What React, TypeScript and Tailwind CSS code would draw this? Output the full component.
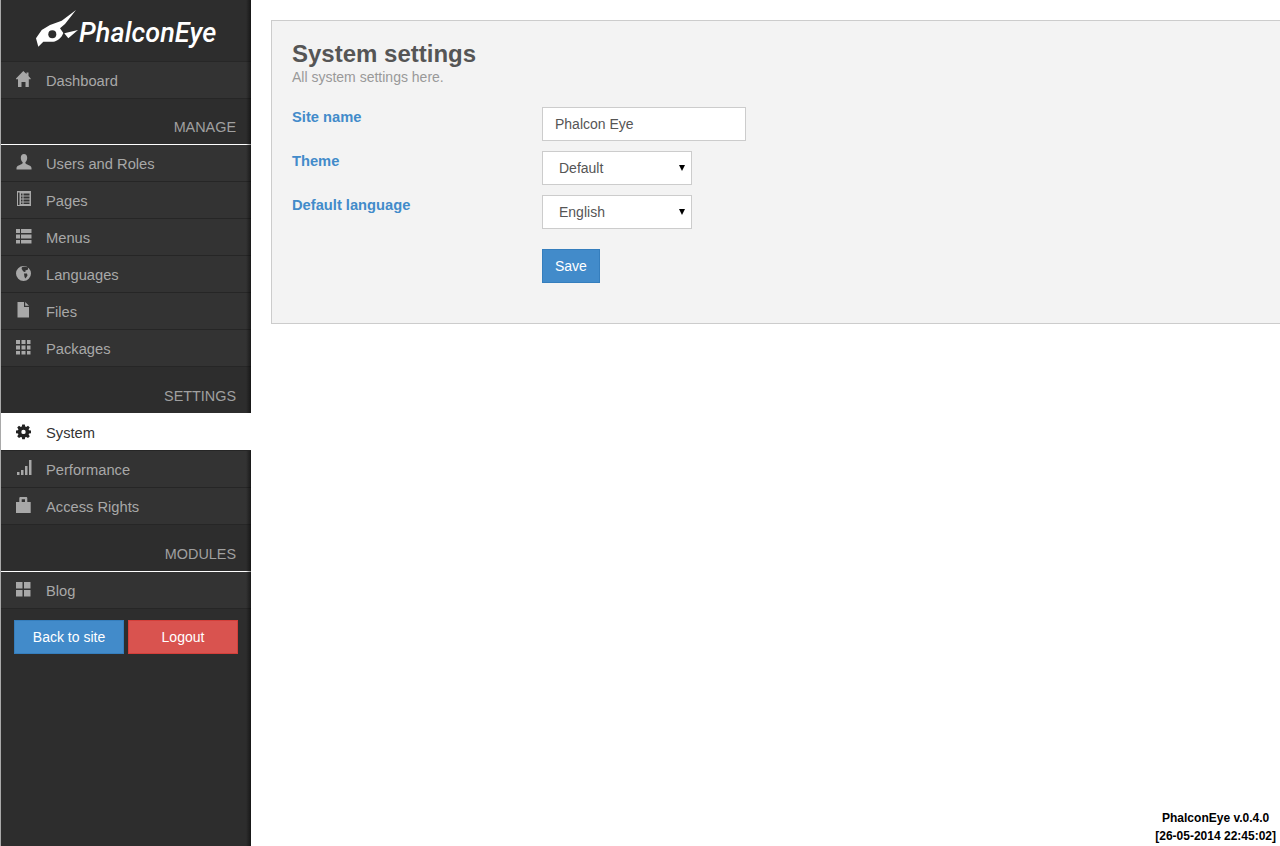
import type { ReactNode } from "react";

const font = "font-['Liberation_Sans',Arial,sans-serif]";

// glyphicon style icons, 16 wide
const icons: Record<string, ReactNode> = {
  home: <path d="M7.300 0 10.500 3V1.500H12.500V5L14.700 7.500V8.300H12.800V16H9.500V11H5.500V16H2V8.300H0V7.500z" />,
  user: <path d="M8 0c2 0 3.200 1.600 3.200 3.800 0 1.700-.7 3.300-1.600 4.200-.4.400-.4 1.200 0 1.600.4.500 1.400.9 2.600 1.400 1.600.6 3.300 1.400 3.300 3V15.500H.5V14c0-1.600 1.700-2.400 3.300-3 1.200-.5 2.200-.9 2.600-1.400.4-.4.4-1.200 0-1.600C5.500 7.100 4.800 5.500 4.800 3.800 4.800 1.600 6 0 8 0z" />,
  pages: <path fillRule="evenodd" d="M1 0h14v15H1zM2 1.500V14h1.500V1.500zM5 2.500v2h1.500v-2zM7.500 2.500v2H13.500v-2zM5 5.500v2h1.500v-2zM7.500 5.500v2H13.500v-2zM5 8.500v2h1.500v-2zM7.500 8.500v2H13.500v-2zM5 11.500v1.500h1.500v-1.500zM7.500 11.500v1.500H13.500v-1.500z" />,
  menus: <path transform="translate(0 1)" d="M0 0h4v4H0zM5 0h10.500v4H5zM0 5.500h4v4H0zM5 5.500h10.500v4H5zM0 11h4v3.500H0zM5 11h10.500v3.500H5z" />,
  globe: <path transform="translate(0 1)" fillRule="evenodd" d="M7.500 0a7.500 7.500 0 1 1 0 15A7.500 7.500 0 0 1 7.500 0zM6 1.200C7.500.6 10 .5 12 1.500V3.500C11 4 10.500 4.500 9.500 4.200V5.800C8 6.200 6.500 5 6.500 4 5.500 3.500 5.500 2 6 1.200zM8 7.500H11L11.500 9.500 9.500 12.500 8.500 11z" />,
  file: <path d="M1.500 0H8v5h5v10.500H1.500zM9.200 0 13 3.800H9.200z" />,
  packages: <path transform="translate(0 1)" d="M0 0h4v4H0zM5.500 0h4v4h-4zM11 0h3.500v4H11zM0 5.500h4v4H0zM5.500 5.500h4v4h-4zM11 5.500h3.500v4H11zM0 11h4v3.500H0zM5.500 11h4v3.500h-4zM11 11h3.500v3.500H11z" />,
  cog: <path transform="translate(0 2.500)" fillRule="evenodd" d="M6.200 0h2.600l.4 2 1 .4L12 1.300l1.800 1.800L12.600 4.700l.4 1 2 .4v2.600l-2 .4-.4 1 1.200 1.600-1.800 1.800-1.800-1.100-1 .4-.4 2H6.200l-.4-2-1-.4L3 13.500 1.200 11.700l1.200-1.600-.4-1L0 8.700V6.100l2-.4.4-1L1.200 3.100 3 1.300l1.800 1.100 1-.4zM7.500 5.200a2.200 2.200 0 1 0 0 4.400 2.200 2.200 0 0 0 0-4.400z" />,
  signal: <path d="M1 12h2.500v3H1zM5 10h2.500v5H5zM9 6h2.500v9H9zM13 0h2.500v15H13z" />,
  lock: <path fillRule="evenodd" d="M3.300 5V1.200C3.300.5 3.800 0 4.500 0h5.600c.7 0 1.200.5 1.200 1.200V5h3.400V16H0V5zM5.700 5H9V2.300H5.700z" />,
  blog: <path transform="translate(0 1)" d="M0 0h6.500v6.500H0zM8 0h6.500v6.500H8zM0 8h6.500v6.500H0zM8 8h6.500v6.500H8z" />,
};

function Icon({ name }: { name: string }) {
  return (
    <svg viewBox="0 0 16 16" className="w-4 h-4 fill-current overflow-visible" aria-hidden="true">
      {icons[name]}
    </svg>
  );
}

function NavItem({ icon, label, active }: { icon: string; label: string; active?: boolean }) {
  return (
    <a
      href="#"
      className={
        active
          ? "relative z-10 h-[38px] flex items-center pl-[15px] bg-white border-b border-[#262626] text-[#333]"
          : "h-[37px] flex items-center pl-[15px] bg-[#333333] border-b border-[#262626] text-[#a8a8a8]"
      }
    >
      <span className={active ? "w-[30px] -mt-[3px] flex text-[#222]" : "w-[30px] -mt-[3px] flex text-[#a8a8a8]"}>
        <Icon name={icon} />
      </span>
      <span className="text-[14.7px] mt-[3px]">{label}</span>
    </a>
  );
}

function SectionTitle({ title, height, line }: { title: string; height: string; line?: boolean }) {
  return (
    <div className={`${height} ${line ? "border-b border-white" : ""} flex items-end justify-end pr-[15px] pb-[5px] text-[14.4px] text-[#a0a0a0]`}>
      {title}
    </div>
  );
}

function Logo() {
  return (
    <div className="h-[62px] flex items-center pl-[29px] bg-[#2d2d2d] border-b border-[#272727]">
      <svg viewBox="0 0 49 50" className="w-[49px] h-[50px] -mt-[1px] fill-white overflow-visible" aria-hidden="true">
        <path d="M46 5 31.700 15.700 20 20 11.700 25 6 33.300 8.300 41.700 13.300 36.700C16 36.800 19.500 37 23.300 36.700 27.500 36.200 31.500 33 33.300 28L30 23.300 35 19z" />
        <circle cx="22.300" cy="29.300" r="4" className="fill-[#2d2d2d]" />
        <path d="M34.300 28.300 48 25 38.300 33.300z" />
      </svg>
      <span className="mt-[6px] text-[27px] tracking-[0.1px] leading-none italic font-medium font-['Roboto',sans-serif] text-white">
        PhalconEye
      </span>
    </div>
  );
}

function Sidebar() {
  return (
    <aside className="relative w-[251px] shrink-0 h-full bg-[#2d2d2d] border-l border-[#a9a9a9]">
      <Logo />
      <NavItem icon="home" label="Dashboard" />
      <SectionTitle title="MANAGE" height="h-[46px]" line />
      <NavItem icon="user" label="Users and Roles" />
      <NavItem icon="pages" label="Pages" />
      <NavItem icon="menus" label="Menus" />
      <NavItem icon="globe" label="Languages" />
      <NavItem icon="file" label="Files" />
      <NavItem icon="packages" label="Packages" />
      <SectionTitle title="SETTINGS" height="h-[46px]" />
      <NavItem icon="cog" label="System" active />
      <NavItem icon="signal" label="Performance" />
      <NavItem icon="lock" label="Access Rights" />
      <SectionTitle title="MODULES" height="h-[47px]" line />
      <NavItem icon="blog" label="Blog" />
      <div className="flex gap-1 pl-[13px] pt-[11px]">
        <a href="#" className="w-[110px] h-[34px] flex items-center justify-center bg-[#428bca] border border-[#357ebd] text-white text-[14px]">
          Back to site
        </a>
        <a href="#" className="w-[110px] h-[34px] flex items-center justify-center bg-[#d9534f] border border-[#d43f3a] text-white text-[14px]">
          Logout
        </a>
      </div>
      <div className="absolute top-0 right-0 bottom-0 w-[5px] bg-gradient-to-r from-transparent to-black/50 pointer-events-none" />
    </aside>
  );
}

function Field({ label, children }: { label: string; children: ReactNode }) {
  return (
    <div className="flex mb-[10px]">
      <label className="w-[250px] shrink-0 text-[14.7px] font-bold text-[#428bca] leading-5">{label}</label>
      {children}
    </div>
  );
}

function Dropdown({ options }: { options: string[] }) {
  return (
    <div className="relative w-[150px] h-[34px]">
      <select className="appearance-none w-full h-full pl-4 bg-white border border-[#cccccc] text-[14px] text-[#555] outline-none">
        {options.map((o) => (
          <option key={o}>{o}</option>
        ))}
      </select>
      <svg viewBox="0 0 6 6" className="absolute right-[7px] top-[14px] w-[6px] h-[6px] fill-black pointer-events-none" aria-hidden="true">
        <path d="M0 0h6L3 6z" />
      </svg>
    </div>
  );
}

export default function App() {
  return (
    <div className={`${font} flex w-[1280px] h-[846px] overflow-hidden bg-white`}>
      <Sidebar />
      <main className="flex-1 min-w-0 flex flex-col pl-5 pt-5">
        <section className="w-[1100px] h-[304px] bg-[#f3f3f3] border border-[#cccccc] pl-5 pt-[18px]">
          <h1 className="text-[24px] leading-[30px] font-bold text-[#555]">System settings</h1>
          <p className="text-[14px] leading-[16px] text-[#999] mb-[22px]">All system settings here.</p>
          <Field label="Site name">
            <input
              readOnly
              value="Phalcon Eye"
              className="w-[204px] h-[34px] px-3 bg-white border border-[#cccccc] text-[14px] text-[#555] outline-none"
            />
          </Field>
          <Field label="Theme">
            <Dropdown options={["Default"]} />
          </Field>
          <Field label="Default language">
            <Dropdown options={["English"]} />
          </Field>
          <div className="pl-[250px] pt-[10px]">
            <button className="h-[34px] px-3 bg-[#428bca] border border-[#357ebd] text-white text-[14px]">Save</button>
          </div>
        </section>
        <footer className="mt-auto self-end pr-1 pb-[1px] text-center text-[12px] leading-[18px] font-bold text-black">
          PhalconEye v.0.4.0
          <br />
          [26-05-2014 22:45:02]
        </footer>
      </main>
    </div>
  );
}
